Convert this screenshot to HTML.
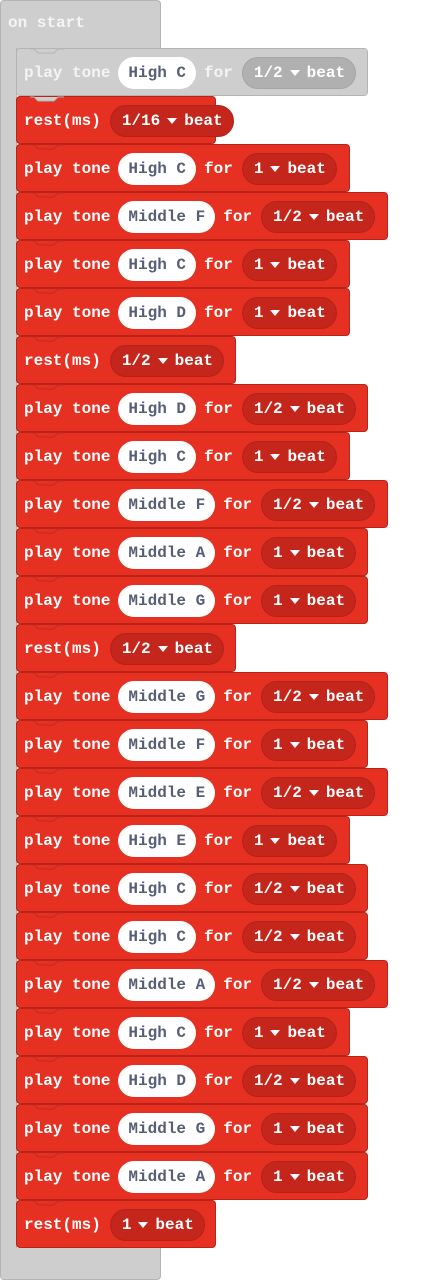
<!DOCTYPE html>
<html><head><meta charset="utf-8"><style>
body{margin:0;width:440px;height:1280px;background:#fff;position:relative;overflow:hidden;font-family:"Liberation Mono",monospace;font-size:16px;font-weight:bold}
.c{position:absolute;background:#cecece;border:1px solid #b4b4b4;box-sizing:border-box}
.b{position:absolute;left:16px;height:48px;background:#e63022;border:1px solid #b8231a;box-sizing:border-box;border-radius:4px;display:flex;align-items:center;color:#fff;padding-left:7px;padding-top:2px;white-space:nowrap}
.b.g{background:#cecece;border-color:#b4b4b4;color:#f4f4f4}
.b>svg{position:absolute;left:13px;top:-1px}
.p{background:#fff;color:#575e75;border-radius:16px;height:32px;line-height:32px;padding:0 10px;margin:0 8px 0 8px}
.d{background:#c4261c;color:#fff;border-radius:16px;height:32px;line-height:32px;padding:0 10px 0 11px;margin-left:9px;border:1px solid #b3221a;box-sizing:border-box;font-size:16px;display:flex;align-items:center}
.d svg{margin:0 7px}
.g .d{background:#b0b0b0;border-color:#a5a5a5}
</style></head><body>
<div class="c" style="left:0;top:0;width:161px;height:60px;border-radius:4px 4px 0 0;border-bottom:none"></div>
<div class="c" style="left:0;top:48px;width:17px;height:1210px;border-top:none;border-bottom:none"></div>
<div class="c" style="left:0;top:1248px;width:161px;height:32px;border-radius:0 0 4px 4px;border-top:none"></div>
<div style="position:absolute;left:8px;top:14px;color:#f4f4f4;font-family:'Liberation Mono',monospace;font-weight:bold;font-size:16px">on start</div>
<div id="w"></div>
<script>
var L=[["g","High C","1/2",352],["r","1/16",200],["t","High C","1",334],["t","Middle F","1/2",372],["t","High C","1",334],["t","High D","1",334],["r","1/2",220],["t","High D","1/2",352],["t","High C","1",334],["t","Middle F","1/2",372],["t","Middle A","1",352],["t","Middle G","1",352],["r","1/2",220],["t","Middle G","1/2",372],["t","Middle F","1",352],["t","Middle E","1/2",372],["t","High E","1",334],["t","High C","1/2",352],["t","High C","1/2",352],["t","Middle A","1/2",372],["t","High C","1",334],["t","High D","1/2",352],["t","Middle G","1",352],["t","Middle A","1",352],["r","1",200]];
var tri='<svg width="10" height="6"><path d="M0 0 L10 0 L5 6 Z" fill="#fff"/></svg>';
var h="";L.forEach(function(b,i){var y=48+i*48;var cls=b[0]=="g"?"b g":"b";var gr=(i<=1);
var notch='<svg width="34" height="6"><path d="M0 1 L4 1 L8 5 L24 5 L28 1 L34 1" fill="'+(gr?'#cecece':'#e63022')+'" stroke="'+(gr?'#b4b4b4':'#c02a20')+'" stroke-width="1"/></svg>';
if(b[0]=="r")h+='<div class="'+cls+'" style="top:'+y+'px;width:'+b[2]+'px">'+notch+'rest(ms)<span class="d">'+b[1]+tri+'beat</span></div>';
else h+='<div class="'+cls+'" style="top:'+y+'px;width:'+b[3]+'px">'+notch+'play tone<span class="p">'+b[1]+'</span>for<span class="d">'+b[2]+tri+'beat</span></div>';});
document.getElementById("w").innerHTML=h;
</script>
</body></html>
